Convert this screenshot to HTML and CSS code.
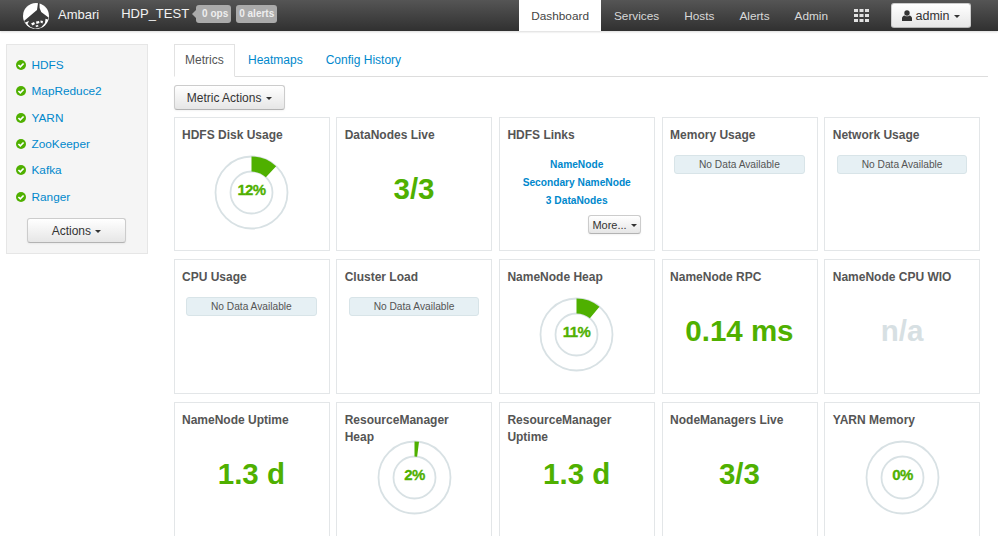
FILE: index.html
```html
<!DOCTYPE html>
<html lang="en">
<head>
<meta charset="utf-8">
<title>Ambari - HDP_TEST</title>
<link rel="stylesheet" href="styles.css">
</head>
<body>
<header class="navbar">
  <svg class="logo" viewBox="0 0 26 26" aria-hidden="true">
    <circle cx="13" cy="13" r="13" fill="#fff"/>
    <path d="M15 0.100 L16.500 0.100 L16.600 5 L18.200 9 L25.500 14.600 L25 16.600 L22.500 15.800 L22 20 L18 24.500 L12 25.800 L7.500 24 L4.500 21 L6 18 L2 19.500 L1 18 L11 9.500 L14 7 Z" fill="#3a3a3a"/>
    <path d="M8 20.500l3-1.500 1 2-2.500 1.500zM13 18.500l3-.5.500 2-3 1zM17.500 17.500l2.500.500-.500 2.500-2-1zM12.500 22.500l2.500-.500.500 1.500-2.500.500z" fill="#fff"/>
  </svg>
  <span class="brand">Ambari</span>
  <span class="cluster">HDP_TEST</span>
  <span class="badge badge-arrow">0 ops</span>
  <span class="badge">0 alerts</span>
  <nav class="nav">
    <a class="nav-item active">Dashboard</a>
    <a class="nav-item">Services</a>
    <a class="nav-item">Hosts</a>
    <a class="nav-item">Alerts</a>
    <a class="nav-item">Admin</a>
    <a class="nav-item nav-apps">
      <svg class="apps" viewBox="0 0 15 13" aria-hidden="true">
        <path d="M0 0h4v3H0zM5.500 0h4v3h-4zM11 0h4v3h-4zM0 5h4v3H0zM5.500 5h4v3h-4zM11 5h4v3h-4zM0 10h4v3H0zM5.500 10h4v3h-4zM11 10h4v3h-4z" fill="#e2e2e2"/>
      </svg>
    </a>
    <button class="btn user-btn">
      <svg class="user" viewBox="0 0 10 11" aria-hidden="true">
        <circle cx="5" cy="3" r="2.700" fill="#333"/>
        <path d="M0 11V8.300C0 6.700 1.300 5.600 2.600 5.400 3.300 6 4.100 6.300 5 6.300S6.700 6 7.400 5.400C8.700 5.600 10 6.700 10 8.300V11z" fill="#333"/>
      </svg>
      admin <i class="caret"></i>
    </button>
  </nav>
</header>

<div class="page">
  <aside class="sidebar">
    <ul class="services">
      <li class="service"><svg class="ok" viewBox="0 0 12 12" aria-hidden="true"><circle cx="6" cy="6" r="5" fill="#4fb000"/><path d="M3.400 6l1.900 1.900 3.300-3.400" fill="none" stroke="#fff" stroke-width="1.700"/></svg><a>HDFS</a></li>
      <li class="service"><svg class="ok" viewBox="0 0 12 12" aria-hidden="true"><circle cx="6" cy="6" r="5" fill="#4fb000"/><path d="M3.400 6l1.900 1.900 3.300-3.400" fill="none" stroke="#fff" stroke-width="1.700"/></svg><a>MapReduce2</a></li>
      <li class="service"><svg class="ok" viewBox="0 0 12 12" aria-hidden="true"><circle cx="6" cy="6" r="5" fill="#4fb000"/><path d="M3.400 6l1.900 1.900 3.300-3.400" fill="none" stroke="#fff" stroke-width="1.700"/></svg><a>YARN</a></li>
      <li class="service"><svg class="ok" viewBox="0 0 12 12" aria-hidden="true"><circle cx="6" cy="6" r="5" fill="#4fb000"/><path d="M3.400 6l1.900 1.900 3.300-3.400" fill="none" stroke="#fff" stroke-width="1.700"/></svg><a>ZooKeeper</a></li>
      <li class="service"><svg class="ok" viewBox="0 0 12 12" aria-hidden="true"><circle cx="6" cy="6" r="5" fill="#4fb000"/><path d="M3.400 6l1.900 1.900 3.300-3.400" fill="none" stroke="#fff" stroke-width="1.700"/></svg><a>Kafka</a></li>
      <li class="service"><svg class="ok" viewBox="0 0 12 12" aria-hidden="true"><circle cx="6" cy="6" r="5" fill="#4fb000"/><path d="M3.400 6l1.900 1.900 3.300-3.400" fill="none" stroke="#fff" stroke-width="1.700"/></svg><a>Ranger</a></li>
    </ul>
    <button class="btn actions-btn">Actions <i class="caret"></i></button>
  </aside>

  <main class="main">
    <div class="tabs">
      <a class="tab active">Metrics</a>
      <a class="tab">Heatmaps</a>
      <a class="tab">Config History</a>
    </div>
    <button class="btn metric-btn">Metric Actions <i class="caret"></i></button>

    <section class="grid">
      <article class="card">
        <h3 class="title">HDFS Disk Usage</h3>
        <svg class="donut" viewBox="0 0 75 75" role="img">
          <circle class="ring" cx="37.500" cy="37.500" r="36"/><circle class="ring" cx="37.500" cy="37.500" r="21"/>
          <path class="wedge" d="M37.500 1.500A36 36 0 0 1 62.140 11.250L51.870 22.190A21 21 0 0 0 37.500 16.500Z"/>
          <text class="pct" x="37.500" y="40">12%</text>
        </svg>
      </article>
      <article class="card">
        <h3 class="title">DataNodes Live</h3>
        <div class="value">3/3</div>
      </article>
      <article class="card">
        <h3 class="title">HDFS Links</h3>
        <div class="links">
          <a>NameNode</a>
          <a>Secondary NameNode</a>
          <a>3 DataNodes</a>
          <button class="btn more-btn">More... <i class="caret"></i></button>
        </div>
      </article>
      <article class="card">
        <h3 class="title">Memory Usage</h3>
        <div class="nodata">No Data Available</div>
      </article>
      <article class="card">
        <h3 class="title">Network Usage</h3>
        <div class="nodata">No Data Available</div>
      </article>

      <article class="card">
        <h3 class="title">CPU Usage</h3>
        <div class="nodata">No Data Available</div>
      </article>
      <article class="card">
        <h3 class="title">Cluster Load</h3>
        <div class="nodata">No Data Available</div>
      </article>
      <article class="card">
        <h3 class="title">NameNode Heap</h3>
        <svg class="donut" viewBox="0 0 75 75" role="img">
          <circle class="ring" cx="37.500" cy="37.500" r="36"/><circle class="ring" cx="37.500" cy="37.500" r="21"/>
          <path class="wedge" d="M37.500 1.500A36 36 0 0 1 60.450 9.760L50.890 21.320A21 21 0 0 0 37.500 16.500Z"/>
          <text class="pct" x="37.500" y="40">11%</text>
        </svg>
      </article>
      <article class="card">
        <h3 class="title">NameNode RPC</h3>
        <div class="value">0.14 ms</div>
      </article>
      <article class="card">
        <h3 class="title">NameNode CPU WIO</h3>
        <div class="value muted">n/a</div>
      </article>

      <article class="card">
        <h3 class="title">NameNode Uptime</h3>
        <div class="value">1.3 d</div>
      </article>
      <article class="card">
        <h3 class="title">ResourceManager Heap</h3>
        <svg class="donut" viewBox="0 0 75 75" role="img">
          <circle class="ring" cx="37.500" cy="37.500" r="36"/><circle class="ring" cx="37.500" cy="37.500" r="21"/>
          <path class="wedge" d="M37.500 1.500A36 36 0 0 1 42.010 1.790L40.130 16.670A21 21 0 0 0 37.500 16.500Z"/>
          <text class="pct" x="37.500" y="40">2%</text>
        </svg>
      </article>
      <article class="card">
        <h3 class="title">ResourceManager Uptime</h3>
        <div class="value">1.3 d</div>
      </article>
      <article class="card">
        <h3 class="title">NodeManagers Live</h3>
        <div class="value">3/3</div>
      </article>
      <article class="card">
        <h3 class="title">YARN Memory</h3>
        <svg class="donut" viewBox="0 0 75 75" role="img">
          <circle class="ring" cx="37.500" cy="37.500" r="36"/><circle class="ring" cx="37.500" cy="37.500" r="21"/>
          <text class="pct" x="37.500" y="40">0%</text>
        </svg>
      </article>
    </section>
  </main>
</div>
</body>
</html>
```
FILE: styles.css
```css
* { box-sizing: border-box; }
html, body { margin: 0; height: 536px; overflow: hidden; }
body {
  background: #fff;
  color: #333;
  font-family: "Liberation Sans", Arial, sans-serif;
  font-size: 12px;
}
a { color: #0088cc; text-decoration: none; }

.navbar {
  display: flex;
  align-items: center;
  height: 31px;
  padding: 0 27px 0 23px;
  background: linear-gradient(#555555, #303030);
  color: #fff;
  box-shadow: 0 1px 2px rgba(0,0,0,.15);
}
.logo { width: 26px; height: 26px; margin-right: 9px; flex: none; }
.brand { font-size: 13px; margin-right: 22px; color: #f2f2f2; position: relative; top: -1px; }
.cluster { font-size: 13px; margin-right: 7px; color: #f2f2f2; position: relative; top: -2px; }
.badge {
  position: relative;
  top: -2px;
  display: block;
  height: 18px;
  padding: 0 3px;
  margin-right: 5px;
  line-height: 18px;
  font-size: 10px;
  font-weight: bold;
  color: #eee;
  background: #aaa;
  border-radius: 3px;
}
.badge-arrow { padding: 0 3px 0 6px; }
.badge-arrow::before {
  content: "";
  position: absolute;
  left: -4px;
  top: 5px;
  border-style: solid;
  border-width: 4px 4px 4px 0;
  border-color: transparent #aaa transparent transparent;
}
.nav { display: flex; align-self: stretch; margin-left: auto; }
.nav-item {
  display: flex;
  align-items: center;
  padding: 0 12.500px;
  color: #d9d9d9;
  font-size: 11.800px;
}
.nav-item.active { padding: 0 12.500px; background: #fff; color: #444; }
.nav-apps { padding-left: 13.500px; }
.apps { width: 15px; height: 13px; display: block; }
.btn {
  font: inherit;
  color: #333;
  background: linear-gradient(#ffffff, #e6e6e6);
  border: 1px solid #ccc;
  border-bottom-color: #b3b3b3;
  border-radius: 3px;
  box-shadow: inset 0 1px 0 rgba(255,255,255,.2), 0 1px 2px rgba(0,0,0,.05);
  padding: 0;
}
.caret {
  display: inline-block;
  width: 0;
  height: 0;
  margin-left: 1px;
  vertical-align: middle;
  border-top: 3.500px solid #333;
  border-left: 3.500px solid transparent;
  border-right: 3.500px solid transparent;
}
.user-btn { align-self: center; width: 80px; height: 25px; margin-left: 9.500px; font-size: 12.500px; }
.user { width: 10px; height: 11px; vertical-align: -1px; }

.page { display: flex; align-items: flex-start; padding: 13px 10px 0 6px; }
.sidebar {
  flex: none;
  width: 142px;
  height: 210px;
  padding: 6.700px 0 0;
  background: #f5f5f5;
  border: 1.500px solid #e6e6e6;
}
.services { list-style: none; margin: 0; padding: 0 0 0 7.500px; font-size: 11.800px; }
.service {
  display: flex;
  align-items: center;
  gap: 5px;
  height: 26.400px;
}
.ok { width: 12px; height: 12px; flex: none; }
.actions-btn { display: block; width: 99px; height: 25px; margin: 8.300px 0 0 20px; }

.main { flex: 1; margin-left: 25.500px; min-width: 0; }
.tabs {
  display: flex;
  height: 33px;
  border-bottom: 1px solid #ddd;
}
.tab {
  display: flex;
  align-items: center;
  height: 33px;
  padding: 0 9px 2px 12px;
  border: 1px solid transparent;
}
.tab.active {
  padding: 0 10px 2px 10.500px;
  width: 61.500px;
  color: #555;
  background: #fff;
  border-color: #e2e2e2 #e2e2e2 #fff;
}
.metric-btn { display: block; width: 111.500px; height: 25px; margin: 8px 0 6.500px; }

.grid {
  display: grid;
  grid-template-columns: repeat(5, 156.200px);
  grid-auto-rows: 134.600px;
  column-gap: 6.500px;
  row-gap: 8.300px;
}
.card {
  display: flex;
  flex-direction: column;
  align-items: center;
  padding: 9px 8px 0 7.500px;
  background: #fff;
  border: 1.500px solid #e3e6e8;
}
.title {
  align-self: stretch;
  height: 28px;
  margin: 0;
  padding-right: 10px;
  font-size: 12px;
  font-weight: bold;
  line-height: 17px;
  color: #555;
}
.donut { display: block; width: 75px; height: 75px; flex: none; }
.ring { fill: none; stroke: #d8e1e4; stroke-width: 1.800; }
.wedge { fill: #4fb000; }
.pct {
  font-size: 15px;
  font-weight: bold;
  fill: #4fb000;
  stroke: #4fb000;
  stroke-width: .3px;
  text-anchor: middle;
  letter-spacing: -.6px;
}
.value {
  margin-top: 14px;
  font-size: 29.500px;
  font-weight: bold;
  line-height: 40px;
  color: #4fb000;
}
.value.muted { color: #d7e0e3; }
.links {
  align-self: stretch;
  display: flex;
  flex-direction: column;
  align-items: center;
  padding-top: 1px;
  font-size: 10.200px;
  font-weight: bold;
  line-height: 18px;
}
.more-btn {
  align-self: flex-end;
  width: 53px;
  height: 19px;
  margin: 5px 5px 0 0;
  font-size: 11px;
  font-weight: normal;
}
.nodata {
  align-self: stretch;
  height: 19px;
  margin: 0 4px;
  font-size: 10.200px;
  line-height: 17px;
  text-align: center;
  color: #555;
  background: #e6f0f4;
  border: 1px solid #d8e4e8;
  border-radius: 3px;
}
```
